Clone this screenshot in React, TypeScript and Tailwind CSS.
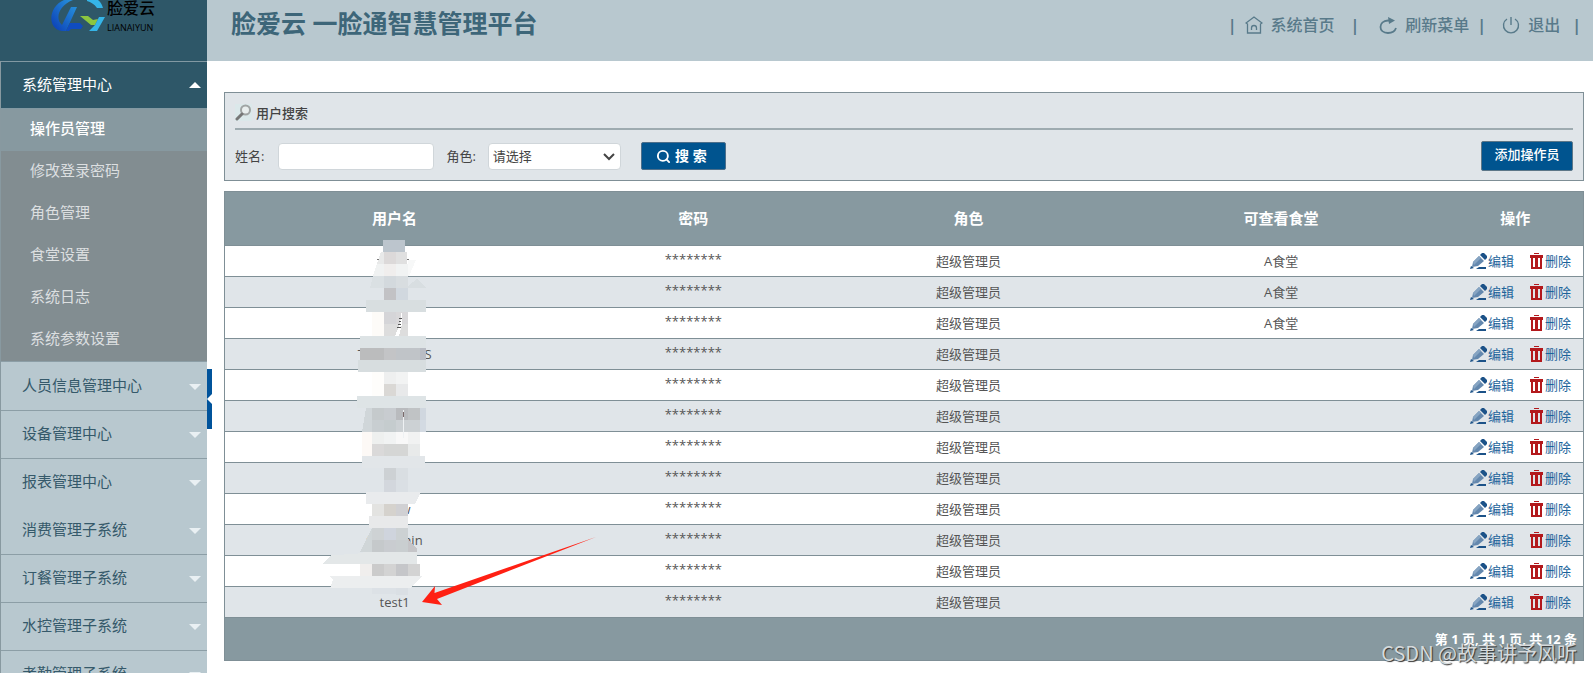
import { LuSearch } from "react-icons/lu"

const subMenus = ["操作员管理", "修改登录密码", "角色管理", "食堂设置", "系统日志", "系统参数设置"]

const menus = [
  { title: "人员信息管理中心", line: false },
  { title: "设备管理中心", line: true },
  { title: "报表管理中心", line: true },
  { title: "消费管理子系统", line: false },
  { title: "订餐管理子系统", line: true },
  { title: "水控管理子系统", line: true },
  { title: "考勤管理子系统", line: true },
]

const users = [
  { id: 1, start: "", end: "", width: "", canteen: "A食堂" },
  { id: 2, start: "", end: "", width: "", canteen: "A食堂" },
  { id: 3, start: "", end: "", width: "", canteen: "A食堂" },
  { id: 4, start: "T", end: "S", width: "w-[74px]", canteen: "" },
  { id: 5, start: "", end: "", width: "", canteen: "" },
  { id: 6, start: "", end: "", width: "", canteen: "" },
  { id: 7, start: "", end: "", width: "", canteen: "" },
  { id: 8, start: "", end: "", width: "", canteen: "" },
  { id: 9, start: "", end: "w", width: "w-8", canteen: "" },
  { id: 10, start: "f", end: "min", width: "w-14", canteen: "" },
  { id: 11, start: "", end: "", width: "", canteen: "" },
  { id: 12, start: "test1", end: "", width: "", canteen: "" },
]

// privacy mosaic over the user names: x, y, width, height, colour
const blocks: [number, number, number, number, string][] = [
  [73, 10, 22, 12, "#bcc5cd"],
  [74, 22, 12, 12, "#dcd9d9"],
  [86, 22, 11, 12, "#e0e0e0"],
  [74, 34, 12, 12, "#f0eeed"],
  [86, 34, 12, 12, "#f1f3f3"],
  [74, 46, 12, 12, "#d3d9dd"],
  [86, 46, 12, 12, "#d8dde0"],
  [74, 58, 12, 12, "#c2c2c5"],
  [86, 58, 12, 12, "#d1d8df"],
  [56, 70, 60, 12, "#d8dee0"],
  [62, 82, 12, 24, "#fdfbf8"],
  [74, 82, 12, 12, "#d5d5d8"],
  [86, 82, 12, 12, "#d9d8da"],
  [74, 94, 24, 12, "#dddddd"],
  [50, 106, 66, 12, "#dde3e5"],
  [50, 118, 24, 12, "#bbbcbd"],
  [74, 118, 12, 12, "#c3c4c6"],
  [86, 118, 24, 12, "#c0c4c8"],
  [110, 118, 6, 12, "#b9bcc4"],
  [48, 130, 68, 12, "#d7dddf"],
  [62, 142, 12, 24, "#fefdfb"],
  [74, 142, 12, 12, "#eeefef"],
  [86, 142, 12, 12, "#f2f3f3"],
  [74, 154, 12, 12, "#dad8d5"],
  [86, 154, 12, 12, "#e8e9ea"],
  [47, 166, 69, 12, "#dee4e6"],
  [62, 178, 12, 12, "#c5cacc"],
  [74, 178, 12, 12, "#c8ccd0"],
  [86, 178, 12, 12, "#b9bbbe"],
  [98, 178, 12, 12, "#c0c3c5"],
  [110, 178, 6, 12, "#d0d7df"],
  [62, 190, 12, 12, "#c8ced1"],
  [74, 190, 12, 12, "#c5ccce"],
  [86, 190, 24, 12, "#ccd1d4"],
  [110, 190, 6, 12, "#d3dae2"],
  [52, 202, 10, 24, "#fdf9f6"],
  [62, 202, 12, 12, "#eef0ef"],
  [74, 202, 12, 12, "#f1f3f3"],
  [86, 202, 12, 12, "#f8f8f8"],
  [98, 202, 12, 12, "#f1f2f2"],
  [62, 214, 12, 12, "#dad9d9"],
  [74, 214, 24, 12, "#d5d6d5"],
  [98, 214, 12, 12, "#e8eaea"],
  [52, 226, 63, 12, "#e2e6e9"],
  [74, 238, 12, 12, "#cdd1d4"],
  [86, 238, 12, 12, "#d9dee2"],
  [74, 250, 12, 12, "#d3d7dd"],
  [86, 250, 12, 12, "#dadfe4"],
  [62, 274, 12, 12, "#e3e3e1"],
  [74, 274, 12, 12, "#d5d2cd"],
  [86, 274, 12, 12, "#d0d0d3"],
  [59, 286, 39, 12, "#e8e9ea"],
  [62, 298, 12, 12, "#ced2d4"],
  [74, 298, 12, 12, "#cfd4dd"],
  [86, 298, 12, 12, "#ccd1d3"],
  [62, 310, 12, 12, "#c5c9cb"],
  [74, 310, 12, 12, "#c9ccd0"],
  [86, 310, 12, 12, "#c9ced0"],
  [50, 334, 12, 12, "#f0eeed"],
  [62, 334, 12, 12, "#cbcbcb"],
  [74, 334, 12, 12, "#d3d3d3"],
  [86, 334, 12, 12, "#c5c6c9"],
  [98, 334, 12, 12, "#d3d3d3"],
  [62, 358, 24, 6, "#dce1e6"],
  [86, 358, 12, 7, "#dadfe4"],
]

const Mosaic = () => (
  <svg
    className="absolute left-[86px] top-[39px] pointer-events-none"
    width="290"
    height="380"
    viewBox="0 0 290 380"
    shapeRendering="crispEdges"
    aria-hidden="true"
  >
    <path d="M71 22H74V34H67Z" fill="#e8e9e9" />
    <path d="M67 34H74V46H63Z" fill="#f0f2f2" />
    <path d="M98 30H106L99 46H98Z" fill="#f7f8f8" />
    <path d="M63 46H74V58H60Z" fill="#dae0e3" />
    <path d="M98 56L107 49L116 58H98Z" fill="#d8dee1" />
    <path d="M67 29.500H69M97 29.500H99" stroke="#777" />
    <path d="M56 178H62V202H52Z" fill="#d0d6d9" />
    <path d="M56 262H111L105 274H56Z" fill="#e9ebed" />
    <path d="M62 298V322H50L58 306Z" fill="#d0d6d8" />
    <path d="M98 310L107 318V322H98Z" fill="#c5c5c8" />
    <path d="M12 334L21 325L46 324L55 322H107V334Z" fill="#e3e7e8" />
    <path d="M20 334H50V346H20Z" fill="#fff" />
    <path d="M20 346H112L101 358H20L23 350Z" fill="#eceeef" />
    {blocks.map(([x, y, w, h, fill]) => (
      <rect key={`${x}-${y}`} x={x} y={y} width={w} height={h} fill={fill} />
    ))}
    <path d="M92 80L90 94L85 106H89L92 94Z" fill="#fff" />
    <path d="M89 88H92M89 91H91M88 94H91M87 97H91" stroke="#555" />
    <path d="M93 180V208" stroke="#eef1f3" />
    <path d="M93 182V187" stroke="#7a6a6a" />
    <path
      d="M112 372L125 356L124.500 363L286 307L127 369L132 375Z"
      fill="#ff2013"
      shapeRendering="auto"
    />
  </svg>
)

const Logo = () => (
  <svg width="54" height="33" viewBox="0 0 54 33" aria-hidden="true">
    <defs>
      <linearGradient id="logoBlue" x1="1" y1="0" x2="0" y2="1">
        <stop offset="0" stopColor="#2a9be0" />
        <stop offset="1" stopColor="#0a3ab4" />
      </linearGradient>
    </defs>
    <path d="M13 0C-1 6-4 24 7 30C9 31 13 31 15 31L26 7H20L11 25C4 19 7 6 22 0Z" fill="url(#logoBlue)" />
    <path d="M15 31L19 23H29L32 26L30 29H20L18 31Z" fill="#0f4cc0" />
    <path d="M36 0H47C50 2 51 5 52 8H46C43 4 40 2 36 1Z" fill="#35b5e8" />
    <path d="M29 16H37L42 20L47 19L44 25H40Z" fill="#8cc63f" />
    <path d="M48 17H54L46 31H38L44 25Z" fill="#35b5e8" />
  </svg>
)

const SearchGlass = () => (
  <svg width="17" height="17" viewBox="0 0 17 17" className="bg-[#dbe8ea]" aria-hidden="true">
    <circle cx="10.500" cy="6" r="4.500" fill="#e9eeee" stroke="#a0a4a4" strokeWidth="2" />
    <path d="M7 10L2 15" stroke="#777" strokeWidth="3" strokeLinecap="round" />
  </svg>
)

const HomeIcon = () => (
  <svg width="18" height="18" viewBox="0 0 18 18" fill="none" stroke="currentColor" strokeWidth="1.300" aria-hidden="true">
    <path d="M2.500 17V8L1 7L9 1L17 7L15.500 8V17ZM6.500 14V12A2.500 2.500 0 0 1 11.500 12V14" />
  </svg>
)

const RefreshIcon = () => (
  <svg width="18" height="18" viewBox="0 0 18 18" fill="none" stroke="currentColor" strokeWidth="1.800" aria-hidden="true">
    <path d="M12 4.500H9C-1 5-1 17 9 17C13 17 16 15 17 12" />
    <path d="M9 1L16 4.500L10 8Z" fill="currentColor" stroke="none" />
  </svg>
)

const PowerIcon = () => (
  <svg width="18" height="18" viewBox="0 0 18 18" fill="none" stroke="currentColor" strokeWidth="1.400" aria-hidden="true">
    <path d="M5 3A7.500 7.500 0 1 0 13 3M9 1V9" />
  </svg>
)

const EditIcon = () => (
  <svg width="18" height="16" viewBox="0 0 18 16" aria-hidden="true">
    <path d="M3 9L9 3L14 8L8 13L2 14Z" fill="#6488ae" />
    <path d="M3 9L9 3L11 5L4 12Z" fill="#86a4c2" />
    <path d="M10 2L12 0H14L17 3V5L15 7Z" fill="#1c5288" />
    <path d="M0 16L1 13L4 15ZM9 14H16V16H6Z" fill="#1c5288" />
  </svg>
)

const TrashIcon = () => (
  <svg width="13" height="16" viewBox="0 0 13 16" fill="#b3191c" aria-hidden="true">
    <path d="M4 0H9V1H4ZM0 2H13V5H0ZM1 5H3V14H5V5H8V14H10V5H12V16H1Z" />
  </svg>
)

const Sidebar = () => (
  <aside className="relative w-[207px] shrink-0 border-l border-[#8899a0] bg-[#b8c8cf] text-[15px]">
    <nav>
      <button className="flex h-12 w-full items-center justify-between border-y border-[#8299a3] bg-[#2e5768] pl-[21px] pr-1.5 text-white">
        <span className="pb-0.5">系统管理中心</span>
        <svg width="12" height="6" viewBox="0 0 12 6" fill="#fff" aria-hidden="true">
          <path d="M0 6L6 0L12 6Z" />
        </svg>
      </button>
      <ul className="border-b border-[#8c9ea6] bg-[#828d91] text-[#dcdfe0]">
        {subMenus.map((name, i) => (
          <li key={name}>
            <a
              href="#"
              className={`flex h-[42px] items-center pb-1 pl-[29px] ${i === 0 ? "bg-[#8799a0] font-medium text-white" : ""}`}
            >
              {name}
            </a>
          </li>
        ))}
      </ul>
      {menus.map((menu) => (
        <button
          key={menu.title}
          className={`flex h-12 w-full items-center justify-between border-t pl-[21px] pr-1.5 text-[#35596a] ${menu.line ? "border-[#8c9ea6]" : "border-[#b8c8cf]"}`}
        >
          <span className="pb-1">{menu.title}</span>
          <svg width="12" height="6" viewBox="0 0 12 6" fill="#e9f0f3" aria-hidden="true">
            <path d="M0 0H12L6 6Z" />
          </svg>
        </button>
      ))}
    </nav>
    <button aria-label="收起菜单" className="absolute -right-[5px] top-[308px] flex h-[60px] w-[5px] items-center bg-[#00539b]">
      <svg width="5" height="10" viewBox="0 0 5 10" fill="#fff" aria-hidden="true">
        <path d="M5 0V10L0 5Z" />
      </svg>
    </button>
  </aside>
)

const SearchPanel = () => (
  <section className="border border-[#7f8f96] bg-[#e0e5e9] px-2.5 pb-[9px] text-[13px] text-[#444]">
    <h2 className="flex h-[37px] items-center gap-1 border-b-2 border-[#9eabb0] pt-1 font-medium">
      <SearchGlass />
      用户搜索
    </h2>
    <form className="flex items-center pt-[11px]" onSubmit={(e) => e.preventDefault()}>
      <label htmlFor="name">姓名:</label>
      <input id="name" type="text" className="ml-3.5 h-[27px] w-[156px] rounded border border-[#d0d6da] bg-white px-1" />
      <label htmlFor="role" className="ml-3">角色:</label>
      <div className="relative ml-3">
        <select id="role" className="block h-[27px] w-[133px] appearance-none rounded border border-[#d0d6da] bg-white pl-1">
          <option>请选择</option>
        </select>
        <svg className="pointer-events-none absolute right-1.5 top-2.5" width="12" height="8" viewBox="0 0 12 8" fill="none" stroke="#444" strokeWidth="2" aria-hidden="true">
          <path d="M1 1L6 6L11 1" />
        </svg>
      </div>
      <button className="ml-5 flex h-7 w-[85px] items-center justify-center gap-1 rounded-xs border border-[#4d6f8b] bg-[#00548f] pr-1 text-[14px] font-bold text-white">
        <LuSearch size={15} strokeWidth={3} aria-hidden="true" />
        搜 索
      </button>
      <button type="button" className="ml-auto h-[30px] w-[92px] rounded-xs border border-[#5d7788] bg-[#00548f] pb-1 font-medium text-white">
        添加操作员
      </button>
    </form>
  </section>
)

const UserTable = () => (
  <section className="relative mt-2.5">
    <table className="w-full table-fixed border-collapse border border-[#7f8f96] text-center text-[13px] text-[#555]">
      <thead>
        <tr className="h-[54px] bg-[#8799a0] text-[15px] text-white">
          <th className="w-[25%] pb-0.5">用户名</th>
          <th className="w-[19%] pb-0.5">密码</th>
          <th className="w-[21.5%] pb-0.5">角色</th>
          <th className="w-[24.5%] pb-0.5">可查看食堂</th>
          <th className="w-[10%] pb-0.5">操作</th>
        </tr>
      </thead>
      <tbody>
        {users.map((user) => (
          <tr key={user.id} className="h-[31px] border-t border-[#7f8f96] bg-white even:bg-[#e0e5e9]">
            <td>
              {user.end ? (
                <span className={`mx-auto flex justify-between ${user.width}`}>
                  <span>{user.start}</span>
                  <span>{user.end}</span>
                </span>
              ) : (
                user.start
              )}
            </td>
            <td className="pb-1">********</td>
            <td>超级管理员</td>
            <td>{user.canteen}</td>
            <td>
              <div className="flex items-center justify-end gap-4 pr-3 text-[#1b639b]">
                <a href="#" className="flex items-center">
                  <EditIcon />
                  编辑
                </a>
                <a href="#" className="flex items-center gap-0.5">
                  <TrashIcon />
                  删除
                </a>
              </div>
            </td>
          </tr>
        ))}
      </tbody>
      <tfoot>
        <tr className="h-[43px] border-t border-[#7f8f96] bg-[#8799a0] font-bold text-white">
          <td colSpan={5} className="pr-1.5 text-right">第 1 页, 共 1 页, 共 12 条</td>
        </tr>
      </tfoot>
    </table>
    <Mosaic />
  </section>
)

const App = () => {
  return (
    <div className="relative flex h-screen flex-col overflow-hidden bg-white font-['Open_Sans','Noto_Sans_CJK_SC',sans-serif] leading-5">
      <header className="flex h-[61px] shrink-0 bg-[#b8c8cf]">
        <div className="flex w-[207px] shrink-0 items-start gap-0.5 bg-[#2e5768] pl-[51px]">
          <Logo />
          <div className="flex flex-col text-black">
            <span className="h-[18px] text-[16px] leading-4 font-medium">脸爱云</span>
            <span className="pt-1 text-[9px] leading-3">LIANAIYUN</span>
          </div>
        </div>
        <h1 className="pl-6 pt-2 text-[25px] leading-[30px] font-bold text-[#3d6679]">脸爱云 一脸通智慧管理平台</h1>
        <nav className="ml-auto flex h-[50px] items-center pr-3 text-[16px] font-medium text-[#587a8a]">
          <span className="mr-2 font-bold">|</span>
          <a href="#" className="flex items-center gap-2">
            <HomeIcon />
            系统首页
          </a>
          <span className="ml-4 mr-5 font-bold">|</span>
          <a href="#" className="flex items-center gap-2">
            <RefreshIcon />
            刷新菜单
          </a>
          <span className="ml-2 mr-4 font-bold">|</span>
          <a href="#" className="flex items-center gap-2">
            <PowerIcon />
            退出
          </a>
          <span className="ml-3 font-bold">|</span>
        </nav>
      </header>
      <div className="flex grow">
        <Sidebar />
        <main className="min-w-0 grow pl-[17px] pr-[9px] pt-[31px]">
          <SearchPanel />
          <UserTable />
        </main>
      </div>
      <span className="absolute bottom-2 right-4 font-['Noto_Sans_CJK_SC',sans-serif] text-[20px] leading-6 text-[#d5dadc] [text-shadow:1px_1px_1px_#333]">
        CSDN @故事讲予风听
      </span>
    </div>
  )
}

export default App
